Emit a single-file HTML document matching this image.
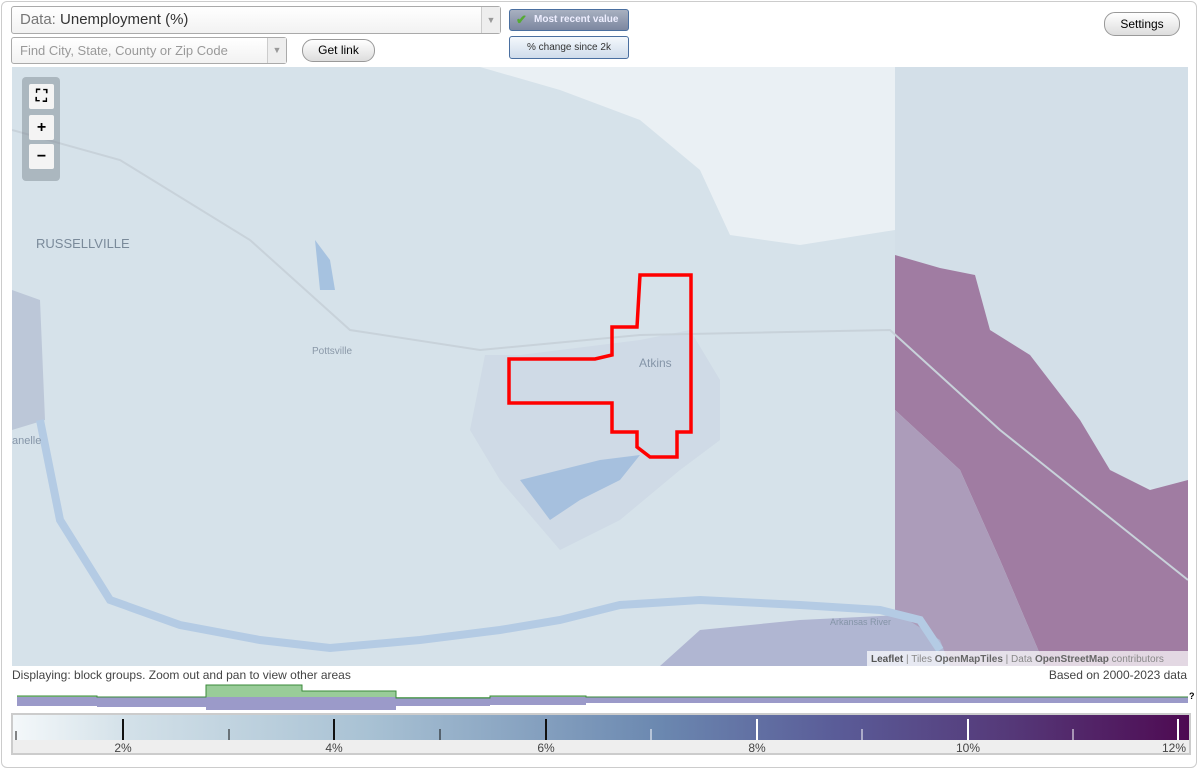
<!DOCTYPE html>
<html><head><style>
body{margin:0;width:1200px;height:771px;background:#fff;font-family:"Liberation Sans",sans-serif;position:relative;overflow:hidden}
.frame{position:absolute;left:1px;top:1px;width:1196px;height:767px;border:1px solid #ccc;border-radius:6px;box-sizing:border-box}
.sel{position:absolute;border:1px solid #aaa;border-radius:3px;background:linear-gradient(#fff,#f2f2f2);box-sizing:border-box}
.arr{position:absolute;right:0;top:0;bottom:0;width:18px;border-left:1px solid #ccc;background:#eee;color:#999;font-size:9px;text-align:center}
.btn{position:absolute;border:1px solid #999;border-radius:11px;background:linear-gradient(#fff,#ddd);font-size:12px;text-align:center;box-sizing:border-box}
.t{position:absolute;font-size:12px;color:#444}
.zc{position:absolute;left:22px;top:77px;width:38px;height:104px;background:rgba(120,130,140,.45);border-radius:4px}
.zb{position:absolute;left:7px;width:25px;height:25px;background:#f4f4f4;border-radius:2px;font-weight:bold;text-align:center;line-height:25px;font-size:16px}
</style></head><body>
<div class="frame"></div>
<div class="sel" style="left:11px;top:6px;width:490px;height:28px;font-size:15px;line-height:26px;padding-left:8px;color:#333"><span style="color:#777">Data:</span> Unemployment (%)<div class="arr" style="line-height:26px">▼</div></div>
<div class="sel" style="left:11px;top:37px;width:276px;height:27px;font-size:13px;line-height:25px;padding-left:8px;color:#999">Find City, State, County or Zip Code<div class="arr" style="line-height:25px">▼</div></div>
<div class="btn" style="left:302px;top:39px;width:73px;height:23px;line-height:21px">Get link</div>
<div style="position:absolute;left:509px;top:9px;width:120px;height:22px;border:1px solid #4a6fa0;border-radius:3px;background:linear-gradient(#a8b0c0,#7c87a0);color:#eef;font-size:10px;font-weight:bold;line-height:20px;box-sizing:border-box;padding-left:24px">Most recent value<span style="position:absolute;left:6px;top:0;color:#5a3;font-size:13px">✔</span></div>
<div style="position:absolute;left:509px;top:36px;width:120px;height:23px;border:1px solid #4a6fa0;border-radius:3px;background:linear-gradient(#f4f8fc,#cfdceb);color:#333;font-size:10px;line-height:21px;text-align:center;box-sizing:border-box">% change since 2k</div>
<div class="btn" style="left:1104px;top:12px;width:76px;height:24px;line-height:22px">Settings</div>

<svg style="position:absolute;left:12px;top:67px" width="1176" height="599" viewBox="12 67 1176 599">
<rect x="12" y="67" width="1176" height="599" fill="#d6e2ea"/>
<path d="M480 67 L560 90 L640 120 L700 170 L730 235 L800 245 L895 230 L895 67Z" fill="#eaf0f4"/>
<path d="M895 67 H1188 V500 L895 400Z" fill="#d3dfe8"/>
<path d="M895 255 L940 268 L975 275 L990 330 L1030 355 L1080 420 L1110 470 L1150 490 L1188 480 V666 H1045 L1000 560 L960 470 L895 410Z" fill="#a07ca2"/>
<path d="M895 410 L960 470 L1000 560 L1045 666 H895Z" fill="#ac9cba"/>
<path d="M12 290 L40 300 L45 420 L12 430Z" fill="#bcc7d8"/>
<path d="M660 666 L700 630 L800 620 L900 615 L940 640 L950 666Z" fill="#b0b6d2"/>
<path d="M485 355 L520 355 L640 340 L690 330 L720 380 L720 440 L680 470 L620 520 L560 550 L500 480 L470 430Z" fill="#ccd7e4" opacity=".7"/>
<path d="M520 480 L560 470 L600 460 L640 455 L620 480 L580 500 L550 520Z" fill="#a6c0de"/>
<path d="M315 240 L330 260 L335 290 L320 290Z" fill="#a6c2e0"/>
<path d="M40 420 L60 520 L110 600 L180 625 L260 640 L330 648 L420 640 L500 630 L560 620 L620 605 L700 600 L800 605 L880 610 L920 620 L940 650" fill="none" stroke="#b4cbe4" stroke-width="8"/>
<path d="M12 130 L120 160 L250 240 L350 330 L480 350 L640 335 L890 330 L1000 430 L1188 580" fill="none" stroke="#c8d2da" stroke-width="2"/>
<path d="M640 275 H691 V432 H677 V457 H650 L637 447 V432 H612 V403 H509 V359 H595 L612 355 V327 H637Z" fill="none" stroke="#f00" stroke-width="3.5"/>
<text x="36" y="248" font-size="13" fill="#7a8a9a" font-family="Liberation Sans">RUSSELLVILLE</text>
<text x="312" y="354" font-size="10" fill="#8a98a8" font-family="Liberation Sans">Pottsville</text>
<text x="639" y="367" font-size="12" fill="#8595a8" font-family="Liberation Sans">Atkins</text>
<text x="12" y="444" font-size="11" fill="#8595a8" font-family="Liberation Sans">anelle</text>
<text x="830" y="625" font-size="9" fill="#8595a8" font-family="Liberation Sans">Arkansas River</text>
<rect x="867" y="651" width="321" height="15" fill="rgba(255,255,255,.7)"/>
<text x="871" y="662" font-size="10" fill="#888" font-family="Liberation Sans"><tspan fill="#555" font-weight="bold">Leaflet</tspan> | Tiles <tspan fill="#666" font-weight="bold">OpenMapTiles</tspan> | Data <tspan fill="#666" font-weight="bold">OpenStreetMap</tspan> contributors</text>
</svg>
<div class="zc"><div class="zb" style="top:7px">⛶</div><div class="zb" style="top:38px">+</div><div class="zb" style="top:67px">−</div></div>

<div class="t" style="left:12px;top:668px">Displaying: block groups. Zoom out and pan to view other areas</div>
<div class="t" style="right:13px;top:668px">Based on 2000-2023 data</div>
<svg style="position:absolute;left:0;top:683px" width="1200" height="30">
<path d="M17 14 H1188 V20 H586 V22 H490 V23 H396 V27 H206 V24 H97 V23 H17Z" fill="#9b9ac9"/>
<path d="M17 13 H97 V14 H206 V2 H302 V8 H396 V15 H490 V13 H586 V14 H1188 V14 H17Z" fill="#99cc99"/>
<path d="M17 13 H97 V14 H206 V2 H302 V8 H396 V15 H490 V13 H586 V14 H1188" fill="none" stroke="#3a8a3a" stroke-width="1"/>
<text x="1189" y="16" font-size="9" font-weight="bold">?</text>
</svg>
<div style="position:absolute;left:11px;top:713px;width:1180px;height:42px;border:2px solid #ccc;background:#eee;box-sizing:border-box"></div>
<div style="position:absolute;left:13px;top:715px;width:1176px;height:25px;background:linear-gradient(90deg,#f4f8fa,#d2e0e8 10%,#a9c2d4 30%,#6b88b0 55%,#5a5c98 70%,#553878 85%,#4e0a52)"></div>
<svg style="position:absolute;left:0;top:715px" width="1200" height="40">
<g stroke="#111" stroke-width="2"><path d="M123 4V25M334 4V25M546 4V25" /></g>
<g stroke="#111" stroke-width="1"><path d="M16 16V25M229 14V25M440 14V25"/></g>
<g stroke="#fff" stroke-width="2"><path d="M757 4V25M968 4V25M1178 4V25"/></g>
<g stroke="#fff" stroke-width="1"><path d="M651 14V25M862 14V25M1073 14V25"/></g>
<g font-size="12" fill="#444" font-family="Liberation Sans" text-anchor="middle"><text x="123" y="37">2%</text><text x="334" y="37">4%</text><text x="546" y="37">6%</text><text x="757" y="37">8%</text><text x="968" y="37">10%</text><text x="1174" y="37">12%</text></g>
</svg>
</body></html>
